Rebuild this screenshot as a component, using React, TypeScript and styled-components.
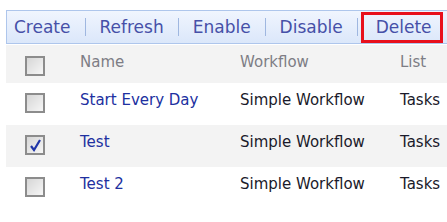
import React from "react";
import styled, { createGlobalStyle } from "styled-components";

const GlobalStyle = createGlobalStyle`
  html, body {
    margin: 0;
    padding: 0;
    background: #ffffff;
  }
  body {
    font-family: "DejaVu Sans", Tahoma, Verdana, sans-serif;
  }
`;

const Page = styled.div`
  width: 447px;
  height: 222px;
  overflow: hidden;
  padding: 10px 0 0 6px;
  box-sizing: border-box;
`;

const Toolbar = styled.div`
  display: flex;
  align-items: center;
  height: 34px;
  padding-left: 7px;
  box-sizing: border-box;
  border: 1px solid #aec6ec;
  border-right: none;
  background: linear-gradient(#f0f5fe, #dbe7fa);
  white-space: nowrap;
`;

const ToolItem = styled.span<{ $outlined?: boolean }>`
  font-size: 17px;
  color: #4650a8;
  line-height: 25px;
  padding: ${(p) => (p.$outlined ? "0 8px 0 12px" : "0")};
  border: ${(p) => (p.$outlined ? "3px solid #e8101c" : "none")};
  margin-left: ${(p) => (p.$outlined ? "-11px" : "0")};
`;

const Separator = styled.span`
  display: inline-block;
  width: 1px;
  height: 18px;
  margin: 0 14px;
  background: #9fb7e0;
`;

const Table = styled.div`
  margin-top: 1px;
`;

const Row = styled.div<{ $shaded?: boolean; $head?: boolean }>`
  display: grid;
  grid-template-columns: 74px 160px 160px 1fr;
  height: ${(p) => (p.$head ? "38px" : "42px")};
  background: ${(p) => (p.$shaded ? "#f3f3f3" : "#ffffff")};
  white-space: nowrap;
`;

const CheckCell = styled.div<{ $head?: boolean }>`
  padding: ${(p) => (p.$head ? "11px" : "10px")} 0 0 19px;
`;

const Box = styled.div`
  width: 16px;
  height: 16px;
  border: 2px solid #8c8c8c;
  background: linear-gradient(135deg, #d6d6d6, #f6f6f6);
  display: flex;
  align-items: center;
  justify-content: center;
`;

const Cell = styled.div<{ $kind: "head" | "link" | "text" }>`
  padding-top: 8px;
  font-size: 15px;
  color: ${(p) =>
    p.$kind === "head" ? "#7d7d85" : p.$kind === "link" ? "#2030a0" : "#1a1a2a"};
`;

const Check = () => (
  <svg width="13" height="13" viewBox="0 0 13 13">
    <path d="M2 7 L5 11 L11 1" fill="none" stroke="#1f35a8" strokeWidth="2.2" />
  </svg>
);

const rows = [
  { name: "Start Every Day", checked: false },
  { name: "Test", checked: true },
  { name: "Test 2", checked: false },
];

export default function App() {
  return (
    <Page>
      <GlobalStyle />
      <Toolbar>
        <ToolItem>Create</ToolItem>
        <Separator />
        <ToolItem>Refresh</ToolItem>
        <Separator />
        <ToolItem>Enable</ToolItem>
        <Separator />
        <ToolItem>Disable</ToolItem>
        <Separator />
        <ToolItem $outlined>Delete</ToolItem>
      </Toolbar>
      <Table>
        <Row $shaded $head>
          <CheckCell $head>
            <Box />
          </CheckCell>
          <Cell $kind="head">Name</Cell>
          <Cell $kind="head">Workflow</Cell>
          <Cell $kind="head">List</Cell>
        </Row>
        {rows.map((r, i) => (
          <Row key={r.name} $shaded={i % 2 === 1}>
            <CheckCell>
              <Box>{r.checked && <Check />}</Box>
            </CheckCell>
            <Cell $kind="link">{r.name}</Cell>
            <Cell $kind="text">Simple Workflow</Cell>
            <Cell $kind="text">Tasks</Cell>
          </Row>
        ))}
      </Table>
    </Page>
  );
}
